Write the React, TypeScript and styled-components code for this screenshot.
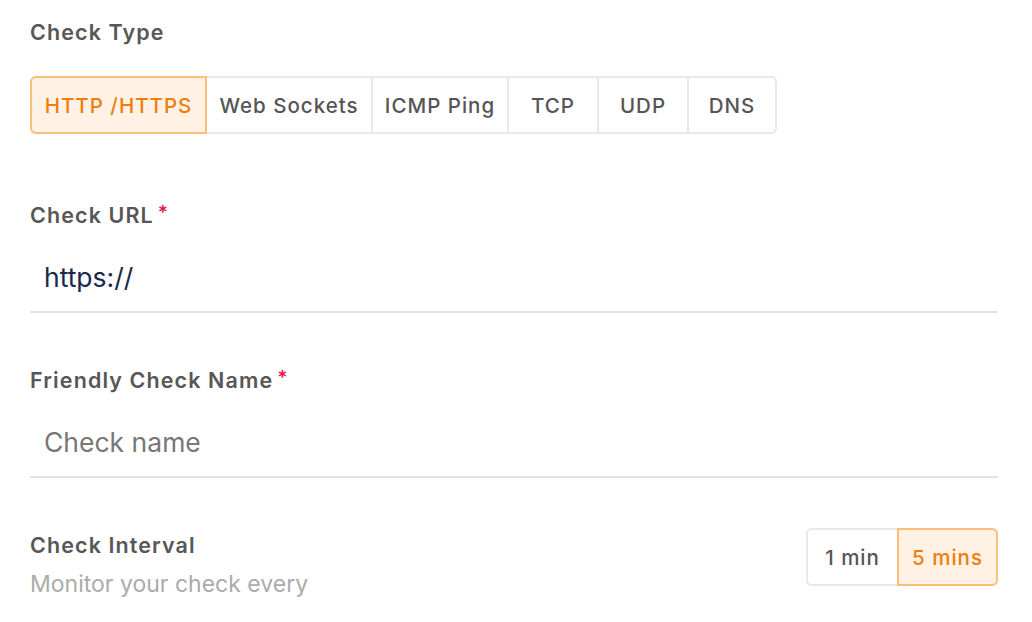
import React, { useState } from 'react';
import styled, { createGlobalStyle } from 'styled-components';

const GlobalStyle = createGlobalStyle`
    body {
        margin: 0;
        background: #ffffff;
        font-family: Inter, "Noto Sans", "Liberation Sans", sans-serif;
        -webkit-font-smoothing: antialiased;
    }
`;

const Form = styled.div`
    width: 968px;
    padding: 18px 34px 0 30px;
`;

const Field = styled.div<{ $gap: number }>`
    margin-bottom: ${({ $gap }) => $gap}px;
`;

const Label = styled.div`
    font-size: 21.5px;
    font-weight: 600;
    letter-spacing: 1.1px;
    color: #575757;
    line-height: 28px;
    display: flex;
    align-items: flex-start;
`;

const Required = styled.span`
    color: #e5194a;
    font-size: 19px;
    margin-left: 4px;
    line-height: 24px;
`;

const SegmentGroup = styled.div<{ $top?: number }>`
    display: inline-flex;
    margin-top: ${({ $top }) => $top ?? 0}px;
    border: 2px solid #e8e8e8;
    border-radius: 6px;
    height: 58px;
    box-sizing: border-box;
`;

const Segment = styled.button<{ $active?: boolean; $width: number }>`
    appearance: none;
    font-family: inherit;
    width: ${({ $width }) => $width}px;
    height: 58px;
    margin: -2px 0 -2px -2px;
    padding: 0;
    border: 2px solid ${({ $active }) => ($active ? '#ffbd7a' : '#e8e8e8')};
    background: ${({ $active }) => ($active ? '#fff1e4' : '#ffffff')};
    color: ${({ $active }) => ($active ? '#f07c0c' : '#555555')};
    font-size: 20.5px;
    font-weight: 500;
    letter-spacing: 1px;
    cursor: pointer;
    position: relative;
    z-index: ${({ $active }) => ($active ? 1 : 0)};

    &:first-child {
        border-radius: 6px 0 0 6px;
    }
    &:last-child {
        border-radius: 0 6px 6px 0;
        margin-right: -2px;
    }
`;

const Input = styled.input`
    display: block;
    width: 100%;
    box-sizing: border-box;
    border: none;
    border-bottom: 2px solid #e3e3e6;
    outline: none;
    padding: 18px 14px 18px;
    margin-top: 14px;
    font-family: inherit;
    font-size: 26.5px;
    color: #18284a;
    background: transparent;

    &::placeholder {
        color: #777777;
    }
`;

const IntervalRow = styled.div`
    display: flex;
    justify-content: space-between;
    align-items: flex-start;
`;

const Hint = styled.div`
    font-size: 23px;
    color: #ababab;
    margin-top: 11px;
`;

const types = [
    { label: 'HTTP /HTTPS', width: 177 },
    { label: 'Web Sockets', width: 168 },
    { label: 'ICMP Ping', width: 138 },
    { label: 'TCP', width: 92 },
    { label: 'UDP', width: 92 },
    { label: 'DNS', width: 90 },
];

const intervals = [
    { label: '1 min', width: 93 },
    { label: '5 mins', width: 101 },
];

const App = () => {
    const [type, setType] = useState('HTTP /HTTPS');
    const [interval, setInterval] = useState('5 mins');
    const [url, setUrl] = useState('https://');
    const [name, setName] = useState('');

    return (
        <Form>
            <GlobalStyle />
            <Field $gap={67}>
                <Label>Check Type</Label>
                <SegmentGroup $top={30}>
                    {types.map(t => (
                        <Segment
                            key={t.label}
                            $width={t.width}
                            $active={type === t.label}
                            onClick={() => setType(t.label)}
                        >
                            {t.label}
                        </Segment>
                    ))}
                </SegmentGroup>
            </Field>
            <Field $gap={53}>
                <Label>
                    Check URL<Required>*</Required>
                </Label>
                <Input value={url} onChange={e => setUrl(e.target.value)} />
            </Field>
            <Field $gap={53}>
                <Label>
                    Friendly Check Name<Required>*</Required>
                </Label>
                <Input
                    placeholder="Check name"
                    value={name}
                    onChange={e => setName(e.target.value)}
                />
            </Field>
            <IntervalRow>
                <div>
                    <Label>Check Interval</Label>
                    <Hint>Monitor your check every</Hint>
                </div>
                <SegmentGroup $top={-3}>
                    {intervals.map(i => (
                        <Segment
                            key={i.label}
                            $width={i.width}
                            $active={interval === i.label}
                            onClick={() => setInterval(i.label)}
                        >
                            {i.label}
                        </Segment>
                    ))}
                </SegmentGroup>
            </IntervalRow>
        </Form>
    );
};

export default App;
